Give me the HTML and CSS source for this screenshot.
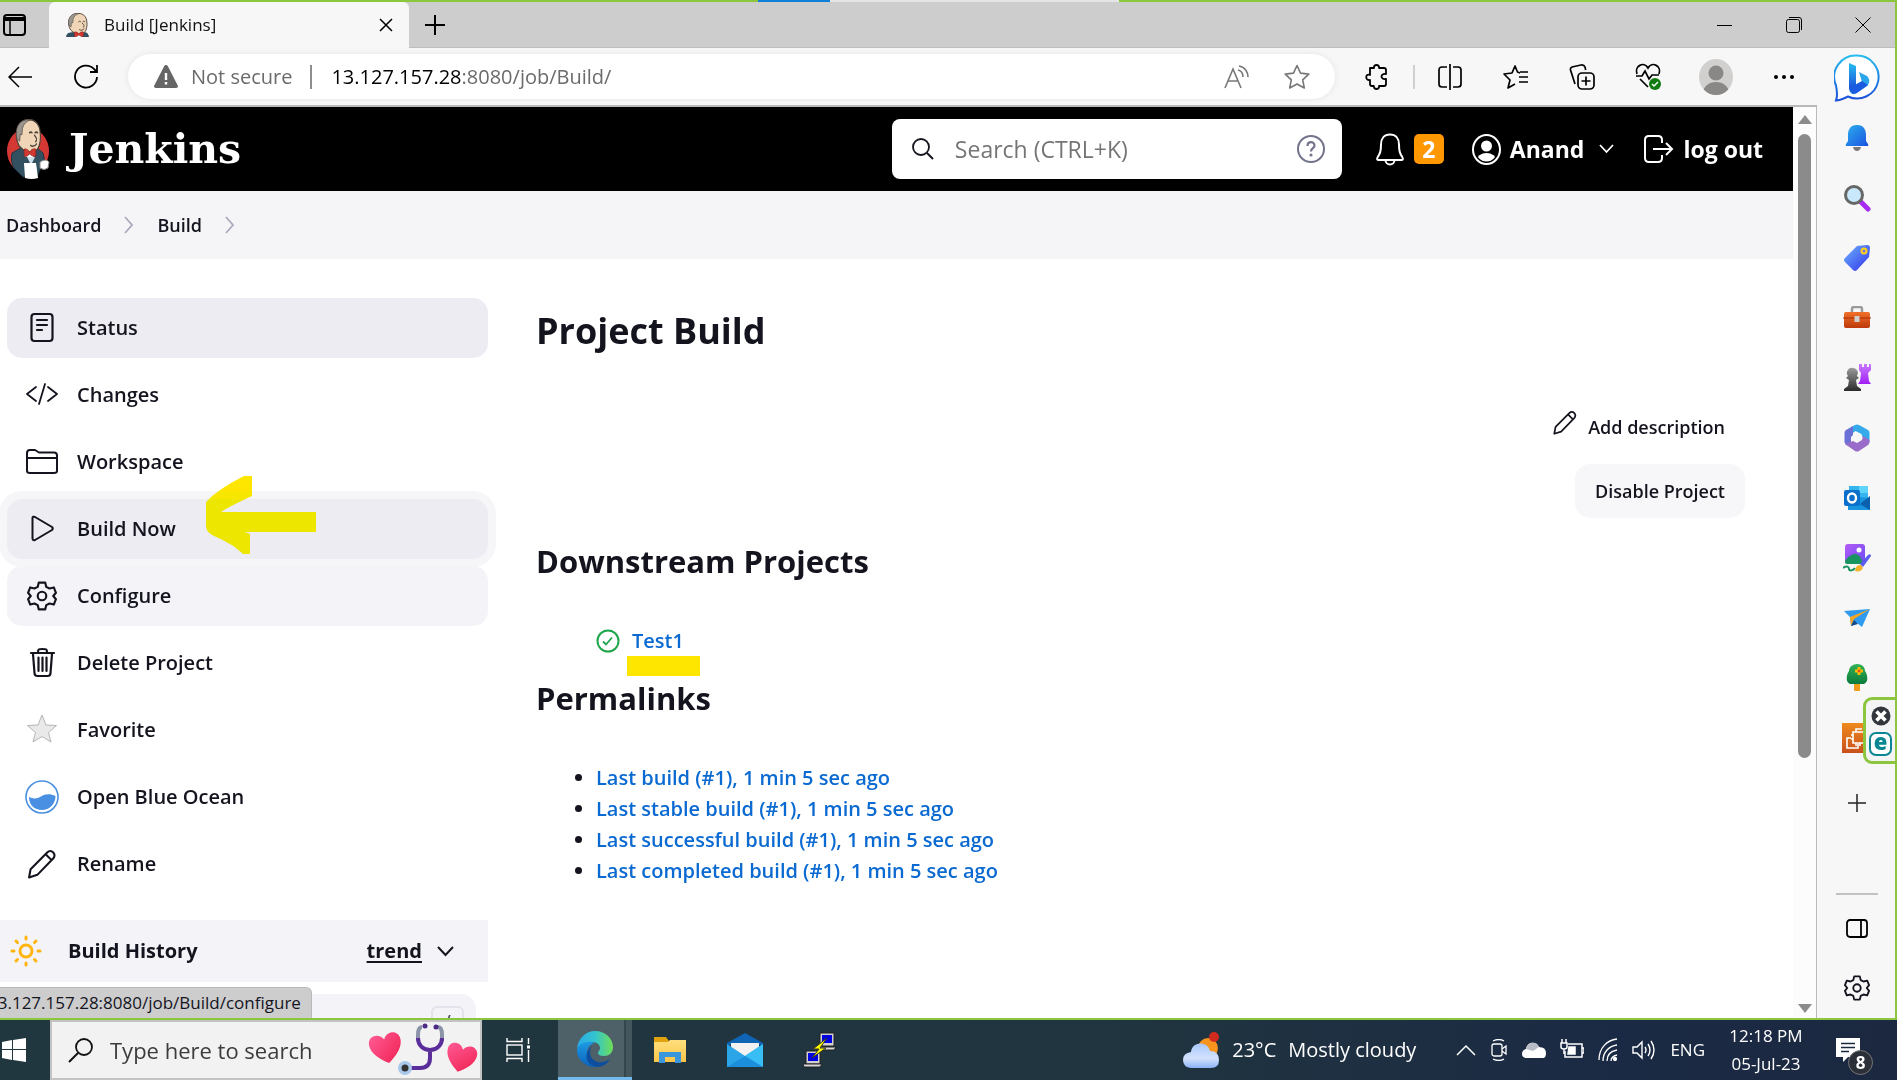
FILE: index.html
```html
<!DOCTYPE html>
<html lang="en">
<head>
<meta charset="utf-8">
<title>Build [Jenkins]</title>
<link rel="stylesheet" href="styles.css">
</head>
<body>
<svg class="defs" aria-hidden="true">
  <defs>
    <linearGradient id="gBlue" x1="0" y1="0" x2="1" y2="1"><stop offset="0" stop-color="#2bb0ee"/><stop offset="1" stop-color="#1b52e0"/></linearGradient>
    <linearGradient id="gBing" x1="0" y1="0" x2="0" y2="1"><stop offset="0" stop-color="#27bdf0"/><stop offset="1" stop-color="#1a4fd8"/></linearGradient>
    <linearGradient id="gTag" x1="0" y1="0" x2="1" y2="1"><stop offset="0" stop-color="#6db5ff"/><stop offset="1" stop-color="#3030e8"/></linearGradient>
    <linearGradient id="gBox" x1="0" y1="0" x2="0" y2="1"><stop offset="0" stop-color="#f0702a"/><stop offset="1" stop-color="#bd3a0c"/></linearGradient>
    <linearGradient id="gPawn" x1="0" y1="0" x2="0" y2="1"><stop offset="0" stop-color="#9a9a9a"/><stop offset="1" stop-color="#2b2b2b"/></linearGradient>
    <linearGradient id="gRook" x1="0" y1="0" x2="0" y2="1"><stop offset="0" stop-color="#c97bff"/><stop offset="1" stop-color="#a01ff5"/></linearGradient>
    <linearGradient id="gTree" x1="0" y1="0" x2="0" y2="1"><stop offset="0" stop-color="#30b457"/><stop offset="1" stop-color="#0c7a3c"/></linearGradient>
    <linearGradient id="gAws" x1="0" y1="0" x2="0" y2="1"><stop offset="0" stop-color="#ef8a1d"/><stop offset="1" stop-color="#c8511b"/></linearGradient>
    <linearGradient id="gHeart" x1="0" y1="0" x2="1" y2="1"><stop offset="0" stop-color="#ff5b95"/><stop offset="1" stop-color="#f0204f"/></linearGradient>
    <linearGradient id="gEdge" x1="0" y1="0" x2="1" y2="0"><stop offset="0" stop-color="#2aa9e8"/><stop offset=".5" stop-color="#33c4cf"/><stop offset="1" stop-color="#6fdf57"/></linearGradient>
    <linearGradient id="gEdgeB" x1="0" y1="0" x2="0" y2="1"><stop offset="0" stop-color="#1d9be5"/><stop offset="1" stop-color="#0c62b8"/></linearGradient>
    <linearGradient id="gFolder" x1="0" y1="0" x2="0" y2="1"><stop offset="0" stop-color="#ffdf7e"/><stop offset="1" stop-color="#fbc547"/></linearGradient>
    <linearGradient id="gCloud" x1="0" y1="0" x2="0" y2="1"><stop offset="0" stop-color="#a9c9fb"/><stop offset=".6" stop-color="#d2e2fd"/><stop offset="1" stop-color="#8db4f5"/></linearGradient>
    <linearGradient id="gPic" x1="0" y1="0" x2="1" y2="1"><stop offset="0" stop-color="#b45cf7"/><stop offset="1" stop-color="#6a4bf3"/></linearGradient>
    <symbol id="butler" viewBox="0 0 54 48" preserveAspectRatio="none">
      <path d="M0 48c1-5 3-8 10-9l16-2 17 1c7 1 10 4 11 10z" fill="#335061"/>
      <path d="M20 36l9 7 10-7-2 12H22z" fill="#fff"/>
      <path d="M11 34C2 22 5 4 24 1c14-2 25 5 25 18 1 8-1 18-9 22-9 3-22 0-29-7z" fill="#f0d6b7" stroke="#49403a" stroke-width="2"/>
      <path d="M7 25C2 9 14-1 32 1c-8 2-13 5-15 11l-1 8-3-1-1 9z" fill="#9a958f" stroke="#49403a"/>
      <path d="M29 18c2-2 4-2 6 0M39 18c2-2 4-2 6 0M38 20c5 4 6 7 2 9M31 33c5 3 9 1 12-2" fill="none" stroke="#49403a" stroke-width="2"/>
      <path d="M20 38c4-1 8 1 10 4 3-4 7-5 11-4v9c-4 1-8-1-11-3-3 3-7 4-10 3z" fill="#d33833" stroke="#81211b"/>
    </symbol>
    <symbol id="pencil" viewBox="0 0 28 28"><path d="M1.500 26.500l1.500-8L19 2.500c4-4 9 1.500 6 5.500L9.500 24zM17.500 4l6.500 6.500" fill="none" stroke="currentColor" stroke-width="2" stroke-linejoin="round"/></symbol>
    <symbol id="cog" viewBox="0 0 28 28"><path d="M11 1.500h6l1 4 3 1.500 4-1 2 5-2.500 3 2.500 3-2 5-4-1-3 1.500-1 4h-6l-1-4-3-1.500-4 1-2-5 2.500-3L1 11l2-5 4 1 3-1.500z" fill="none" stroke="currentColor" stroke-width="2" stroke-linejoin="round"/><circle cx="14" cy="14" r="4" fill="none" stroke="currentColor" stroke-width="2"/></symbol>
    <symbol id="heart" viewBox="0 0 34 32"><path d="M17 31C8 25 1 18 1 10 1 0 13-1 17 7c4-8 16-7 16 3 0 8-7 15-16 21z" fill="url(#gHeart)"/></symbol>
  </defs>
</svg>

<div class="browser">
  <div class="share-line" aria-hidden="true"><span></span></div>
  <header class="titlebar">
    <button class="tab-actions" aria-label="Tab actions"><svg width="23" height="22" viewBox="0 0 23 22"><rect x="1" y="1" width="21" height="20" rx="3" fill="none" stroke="#000" stroke-width="2"/><path d="M1 3h21v4H1z"/><path d="M7 7v14" stroke="#000" stroke-width="1.500"/></svg></button>
    <div class="tab">
      <svg class="favicon" width="23" height="24"><use href="#butler"/></svg>
      <span class="tab-title">Build [Jenkins]</span>
      <button class="tab-close" aria-label="Close tab"><svg width="14" height="14" viewBox="0 0 14 14"><path d="M1 1l12 12M13 1L1 13" stroke="#000" stroke-width="1.500"/></svg></button>
    </div>
    <button class="new-tab" aria-label="New tab"><svg width="22" height="22" viewBox="0 0 22 22"><path d="M11 1v20M1 11h20" stroke="#000" stroke-width="2"/></svg></button>
    <div class="window-controls">
      <button aria-label="Minimize"><svg width="16" height="16" viewBox="0 0 16 16"><path d="M0 8.500h15" stroke="#000"/></svg></button>
      <button aria-label="Restore"><svg width="16" height="16" viewBox="0 0 16 16"><rect x=".5" y="2.500" width="13" height="13" rx="2" fill="none" stroke="#000"/><path d="M3 .5h10a2.500 2.500 0 0 1 2.500 2.500v10" fill="none" stroke="#000"/></svg></button>
      <button aria-label="Close"><svg width="16" height="16" viewBox="0 0 16 16"><path d="M.5.5l15 15M15.500.5l-15 15" stroke="#000"/></svg></button>
    </div>
  </header>

  <div class="window">
    <div class="main-column">
      <div class="toolbar">
        <button class="nav" aria-label="Back"><svg width="24" height="22" viewBox="0 0 24 22"><path d="M11 1L1 11l10 10M1 11h23" fill="none" stroke="#000" stroke-width="1.500"/></svg></button>
        <button class="nav reload" aria-label="Refresh"><svg width="26" height="26" viewBox="0 0 26 26"><path d="M24 13a11 11 0 1 1-3-8l2.500 2.500M24 1v7h-7" fill="none" stroke="#000" stroke-width="1.800"/></svg></button>
        <div class="address">
          <svg width="24" height="23" viewBox="0 0 24 23"><path d="M12 0c1 0 1.500.5 2 1.500L24 21c0 1-.5 2-2 2H2c-1.500 0-2-1-2-2L10 1.500C10.500.5 11 0 12 0z" fill="#666"/><path d="M12 8v7M12 17v2.500" stroke="#fff" stroke-width="2.400"/></svg>
          <span class="insecure">Not secure</span>
          <span class="url"><b>13.127.157.28</b>:8080/job/Build/</span>
          <button aria-label="Read aloud"><svg width="26" height="24" viewBox="0 0 26 24"><path d="M1 23L9 4l8 19M4 16h10M14 5c4 1 5 4 5 7M15 1c6 1 9 6 9 11" fill="none" stroke="#777" stroke-width="1.600"/></svg></button>
          <button aria-label="Add to favorites"><svg width="26" height="26" viewBox="0 0 26 26"><path d="M13 1.500l3.500 7.600 8.300 1-6.100 5.700 1.600 8.200L13 20l-7.300 4 1.600-8.200L1.200 10.100l8.300-1z" fill="none" stroke="#777" stroke-width="1.600" stroke-linejoin="round"/></svg></button>
        </div>
        <button class="tool" aria-label="Extensions"><svg width="26" height="26" viewBox="0 0 26 26"><path d="M5 4h4c-1-4 6-4 5 0h5q2 0 2 2v4c-6-1-6 6 0 5v5q0 2-2 2h-5c1 4-6 4-5 0H7q-2 0-2-2v-4c-5 1-5-7 0-5V6z" fill="none" stroke="#000" stroke-width="1.800" stroke-linejoin="round"/></svg></button>
        <span class="tool-divider"></span>
        <button class="tool" aria-label="Split screen"><svg width="24" height="26" viewBox="0 0 24 26"><path d="M9 3H4Q1 3 1 6v14q0 3 3 3h5M15 3h5q3 0 3 3v14q0 3-3 3h-5M12 0v26" fill="none" stroke="#000" stroke-width="1.700"/></svg></button>
        <button class="tool" aria-label="Favorites"><svg width="26" height="26" viewBox="0 0 26 26"><path d="M17 9l-2.500-1L12 2 9 9l-8 1 6 6-2 8 7-4M16 13h9M16 18h9M17 8h8" fill="none" stroke="#000" stroke-width="1.700" stroke-linejoin="round"/></svg></button>
        <button class="tool" aria-label="Collections"><svg width="26" height="26" viewBox="0 0 26 26"><rect x="9" y="9" width="16" height="16" rx="4" fill="none" stroke="#000" stroke-width="1.700"/><path d="M17 12.500v9M12.500 17h9M6 20L1.500 6Q1 4 3 3l9-2q3-.5 4 2l.7 3" fill="none" stroke="#000" stroke-width="1.700"/></svg></button>
        <button class="tool" aria-label="Browser essentials"><svg width="26" height="27" viewBox="0 0 26 27"><path d="M2 11C-1 3 9-2 13 5c4-7 14-2 11 6M1 13h6l3-5 4 8 3-4h7M5 16l8 8" fill="none" stroke="#000" stroke-width="1.700"/><circle cx="20" cy="21" r="6" fill="#0f7b10"/><path d="M17 21l2 2 4-4" fill="none" stroke="#fff" stroke-width="1.400"/></svg></button>
        <button class="tool wide" aria-label="Profile"><svg width="34" height="36" viewBox="0 0 34 36"><clipPath id="av"><ellipse cx="17" cy="18" rx="17" ry="18"/></clipPath><g clip-path="url(#av)"><path d="M0 0h34v36H0z" fill="#d2d0ce"/><circle cx="17" cy="14" r="7.500" fill="#8a8886"/><ellipse cx="17" cy="34" rx="13" ry="11" fill="#8a8886"/></g></svg></button>
        <button class="tool" aria-label="Settings and more"><svg width="20" height="6" viewBox="0 0 20 6"><circle cx="2" cy="3" r="2"/><circle cx="10" cy="3" r="2"/><circle cx="18" cy="3" r="2"/></svg></button>
      </div>

      <div class="viewport">
        <div class="page">
          <header class="jenkins-header">
            <a class="brand" href="#">
              <svg width="44" height="60" viewBox="0 0 44 60"><ellipse cx="21" cy="32" rx="21" ry="23" fill="#d33833"/><path d="M5 34l9-5h16l6 5 2 10-4 4-4 10H16l-8-8c-4-4-4-12-3-16z" fill="#335061" stroke="#1d3440"/><path d="M17 32l7 14 7-14z" fill="#cfe0ea"/><use href="#butler" x="6" y="0" width="30" height="38"/><path d="M17 44h12l2 15q-6 2-13 0z" fill="#fff"/><path d="M33 43q6-4 9 0l-1 6q-4 3-8 0z" fill="#fff" stroke="#888"/></svg>
              <span>Jenkins</span>
            </a>
            <label class="search">
              <svg width="22" height="22" viewBox="0 0 22 22"><circle cx="9" cy="9" r="8" fill="none" stroke="#14141f" stroke-width="1.800"/><path d="M15 15l6 6" stroke="#14141f" stroke-width="2"/></svg>
              <input type="text" placeholder="Search (CTRL+K)" aria-label="Search">
              <a href="#" aria-label="Search help"><svg width="28" height="28" viewBox="0 0 28 28"><circle cx="14" cy="14" r="13" fill="none" stroke="#73738c" stroke-width="2"/><path d="M10.500 11c0-5 7-5 7-.5 0 3-3.500 2.500-3.500 6" fill="none" stroke="#73738c" stroke-width="2.200"/><circle cx="14" cy="20" r="1.600" fill="#73738c"/></svg></a>
            </label>
            <a class="notices" href="#"><svg width="28" height="33" viewBox="0 0 28 33"><path d="M14 1.500C8 1.500 5 6 5 11.500c0 7-1 9-3.500 13q-1 2.500 1 2.500h23q2 0 1-2.500C24 20.500 23 18.500 23 11.500 23 6 20 1.500 14 1.500zM9.500 27c0 6 9 6 9 0" fill="none" stroke="#fff" stroke-width="2"/></svg><span class="badge">2</span></a>
            <a class="user" href="#"><svg width="29" height="31" viewBox="0 0 29 31"><clipPath id="uc"><ellipse cx="14.500" cy="15.500" rx="11" ry="12"/></clipPath><ellipse cx="14.500" cy="15.500" rx="13.500" ry="14.500" fill="none" stroke="#fff" stroke-width="2"/><g fill="#fff" clip-path="url(#uc)"><circle cx="14.500" cy="12" r="5.500"/><ellipse cx="14.500" cy="27" rx="10" ry="8"/></g></svg><span>Anand</span><svg class="caret" width="15" height="10" viewBox="0 0 15 10"><path d="M1 1l6.500 7L14 1" fill="none" stroke="#fff" stroke-width="1.800"/></svg></a>
            <a class="logout" href="#"><svg width="30" height="28" viewBox="0 0 30 28"><path d="M18 8V5q0-4-4-4H5Q1 1 1 5v18q0 4 4 4h9q4 0 4-4v-3M9 14h19M22 8l6 6-6 6" fill="none" stroke="#fff" stroke-width="2"/></svg><span>log out</span></a>
          </header>

          <nav class="crumbs" aria-label="Breadcrumb">
            <a href="#">Dashboard</a>
            <svg width="10" height="18" viewBox="0 0 10 18"><path d="M1 1l7 8-7 8" fill="none" stroke="#a9a9bc" stroke-width="1.800"/></svg>
            <a href="#">Build</a>
            <svg width="10" height="18" viewBox="0 0 10 18"><path d="M1 1l7 8-7 8" fill="none" stroke="#a9a9bc" stroke-width="1.800"/></svg>
          </nav>

          <div class="page-body">
            <aside class="side">
              <nav class="tasks">
                <a class="task current" href="#"><svg width="32" height="32" viewBox="0 0 32 32" fill="none" stroke="#14141f" stroke-width="2.200" stroke-linecap="round"><rect x="5.500" y="2" width="21" height="27" rx="3"/><path d="M11 8h10M11 13h10M11 18h5"/></svg>Status</a>
                <a class="task" href="#"><svg width="32" height="32" viewBox="0 0 32 32" fill="none" stroke="#14141f" stroke-width="1.800" stroke-linecap="round" stroke-linejoin="round"><path d="M10 8l-9 7 9 7M22 8l9 7-9 7M19 5l-6 20"/></svg>Changes</a>
                <a class="task" href="#"><svg width="32" height="32" viewBox="0 0 32 32" fill="none" stroke="#14141f" stroke-width="2" stroke-linejoin="round"><path d="M1 25V7q0-3 3-3h5l4 2.500h15q3 0 3 3V25q0 2-3 2H4q-3 0-3-2zM1 12h30"/></svg>Workspace</a>
                <a class="task focused" href="#"><svg width="32" height="32" viewBox="0 0 32 32" fill="none" stroke="#14141f" stroke-width="2" stroke-linejoin="round"><path d="M6.500 5v20q0 3 2.500 2l17-10q1.500-1.500 0-3L9 4Q6.500 3 6.500 5z"/></svg>Build Now</a>
                <a class="task hovered" href="#"><svg width="30" height="32"><use href="#cog"/></svg>Configure</a>
                <a class="task" href="#"><svg width="32" height="32" viewBox="0 0 32 32" fill="none" stroke="#14141f" stroke-width="2.200" stroke-linecap="round"><path d="M5 6h23M12 5c0-3 1-3 4.500-3S21 2 21 5M7 7l1.500 19q0 3 3 3h10q3 0 3-3L26 7M12.500 10.500V24M16.500 10.500V24M20.500 10.500V24"/></svg>Delete Project</a>
                <a class="task" href="#"><svg width="32" height="32" viewBox="0 0 32 32"><path d="M16 1l4 10 10.500.5-8 7L25 28l-9-5.500L7 28l2.500-9.500-8-7L12 11z" fill="#e9e9e9" stroke="#b5b5b5"/></svg>Favorite</a>
                <a class="task" href="#"><svg width="34" height="34" viewBox="0 0 34 34"><circle cx="17" cy="17" r="16" fill="#fff" stroke="#4a90e2" stroke-width="1.600"/><path d="M4 17c4 2 8 2 12-.5s9-3 14.500-.5c0 8-6 14-13.500 14S4 25 4 17z" fill="#4a90e2"/></svg>Open Blue Ocean</a>
                <a class="task" href="#"><svg width="32" height="29"><use href="#pencil"/></svg>Rename</a>
              </nav>
              <section class="history">
                <div class="history-head">
                  <svg width="32" height="32" viewBox="0 0 32 32" fill="none" stroke="#ffb40e" stroke-width="3" stroke-linecap="round"><circle cx="16" cy="16" r="6"/><path d="M16 2v2M16 28v2M2 16h2M28 16h2M6 6l1.500 1.500M24.500 24.500L26 26M26 6l-1.500 1.500M7.500 24.500L6 26"/></svg>
                  <h2>Build History</h2>
                  <a href="#">trend</a>
                  <svg width="17" height="11" viewBox="0 0 17 11"><path d="M1 1l7.500 8L16 1" fill="none" stroke="#14141f" stroke-width="2"/></svg>
                </div>
                <div class="filter"><kbd>/</kbd></div>
              </section>
              <svg class="arrow-mark" width="110" height="78" viewBox="0 0 110 78" aria-hidden="true"><path d="M0 26Q12 13 38 0h8v20Q24 30 15 36h95v20H39l5 2v20h-7Q27 68 8 60 0 56 0 50z" fill="#ffe600"/></svg>
            </aside>

            <main class="content">
              <h1>Project Build</h1>
              <div class="actions">
                <a class="describe" href="#"><svg width="24" height="24"><use href="#pencil"/></svg>Add description</a>
                <button class="disable">Disable Project</button>
              </div>
              <h2>Downstream Projects</h2>
              <p class="downstream">
                <svg width="24" height="24" viewBox="0 0 24 24" fill="none" stroke="#1ea64b"><circle cx="12" cy="12" r="10.500" stroke-width="2"/><path d="M7 12.500l3 3 6-7" stroke-width="1.800"/></svg>
                <a href="#">Test1</a>
              </p>
              <h2>Permalinks</h2>
              <ul class="permalinks">
                <li><a href="#">Last build (#1), 1 min 5 sec ago</a></li>
                <li><a href="#">Last stable build (#1), 1 min 5 sec ago</a></li>
                <li><a href="#">Last successful build (#1), 1 min 5 sec ago</a></li>
                <li><a href="#">Last completed build (#1), 1 min 5 sec ago</a></li>
              </ul>
            </main>
          </div>
        </div>
        <div class="scrollbar" aria-hidden="true">
          <svg width="14" height="9" viewBox="0 0 14 9"><path d="M0 9l7-9 7 9z" fill="#8b8b8b"/></svg>
          <div class="track"><div class="thumb"></div></div>
          <svg width="14" height="9" viewBox="0 0 14 9"><path d="M0 0l7 9 7-9z" fill="#8b8b8b"/></svg>
        </div>
        <div class="status-bubble">13.127.157.28:8080/job/Build/configure</div>
      </div>
    </div>

    <aside class="edge-bar">
      <button class="bing" aria-label="Bing chat"><svg width="46" height="48" viewBox="0 0 46 48"><path d="M23 1.500a21.500 21.500 0 1 1-9 41c-4 2-8 4-12 4 2-5 1-10 0-15A21.500 21.500 0 0 1 23 1.500z" fill="#fff" stroke="url(#gBing)" stroke-width="2"/><path d="M15 9l7 3v19l-7 4z" fill="url(#gBing)"/><path d="M25 18l8 4c3 3 3 7 0 10l-12 8q-5 1-6-5l13-7z" fill="#2aa5ea"/><path d="M15 34l13-7 6 4-11 8q-6 3-8-5z" fill="#1b5be0"/></svg></button>
      <button aria-label="Notifications"><svg width="26" height="28" viewBox="0 0 26 28"><path d="M13 1C6 1 4 6 4 11v6l-2 3q-1 2 1 2h20q2 0 1-2l-2-3v-6c0-5-2-10-9-10z" fill="url(#gBlue)"/><path d="M9 23h8q-1 4-4 4t-4-4z" fill="#777"/></svg></button>
      <button aria-label="Search"><svg width="28" height="28" viewBox="0 0 28 28"><path d="M18 18l7 7" stroke="#a52cf0" stroke-width="5" stroke-linecap="round"/><circle cx="11" cy="11" r="8.500" fill="#c9e8fb" stroke="#676767" stroke-width="3"/></svg></button>
      <button aria-label="Shopping"><svg width="26" height="28" viewBox="0 0 26 28"><path d="M13 2l10-1q3 0 3 3l-1 9-12 13q-2 2-4 0l-8-8q-2-2 0-4z" fill="url(#gTag)"/><circle cx="20" cy="7" r="2.500" fill="#7a74d8" stroke="#ffd31a" stroke-width="2"/></svg></button>
      <button aria-label="Tools"><svg width="28" height="24" viewBox="0 0 28 24"><path d="M9 6V3q0-2 2-2h6q2 0 2 2v3" fill="none" stroke="#9a9a9a" stroke-width="2.500"/><rect x="1" y="6" width="26" height="16" rx="2" fill="url(#gBox)"/><path d="M0 12h28" stroke="#a83209"/><rect x="11.500" y="10" width="5" height="6" fill="#cfcfcf"/></svg></button>
      <button aria-label="Games"><svg width="28" height="28" viewBox="0 0 28 28"><path d="M16 0h3v3h2V0h3v3h2V0h2v6l-3 3 1 8 2 3H15l2-3 1-8-2-3z" fill="url(#gRook)"/><path d="M10 4a5 5 0 0 1 4 8l2 2-3 2 1 6 4 3v2H1v-2l4-3 1-6-3-2 2-2a5 5 0 0 1 5-8z" fill="url(#gPawn)"/></svg></button>
      <button aria-label="Microsoft 365"><svg width="26" height="28" viewBox="0 0 26 28"><path d="M11 1q2-1 4 0l9 5q1.500 1 1.500 3v9l-7-5-1-3-6-3-4 3V3z" fill="#35a9ea"/><path d="M9 2v9l-2 2v5l-3 4Q.5 20 .5 18V9q0-2 1.500-3z" fill="#6b70d6"/><path d="M1 20l8-3 4 2 5-3 1-4 6.500 4v2q0 2-1.500 3l-9 6q-2 1-4 0z" fill="#9a6bc8"/></svg></button>
      <button aria-label="Outlook"><svg width="26" height="26" viewBox="0 0 26 26"><path d="M5 1h19v12H5z" fill="#35b5f0"/><path d="M15 1h9v7h-9z" fill="#5fd4fb"/><path d="M4 11l22 2v12H4z" fill="#1793df"/><path d="M26 11l-10 8 10 6z" fill="#0a5fae"/><rect x="0" y="5" width="16" height="16" rx="2" fill="#0a70cb"/><ellipse cx="8" cy="13" rx="4" ry="4.500" fill="none" stroke="#fff" stroke-width="2.400"/></svg></button>
      <button aria-label="Image creator"><svg width="28" height="28" viewBox="0 0 28 28"><rect x="2" y="0" width="20" height="20" rx="3" fill="url(#gPic)"/><circle cx="16" cy="6" r="2.500" fill="#fff"/><path d="M2 17q5-7 10-7t7 7v3H4q-2 0-2-3z" fill="#19935f"/><path d="M0 24c4-3 6-1 6 1s4 2 6-1" fill="none" stroke="#19935f" stroke-width="2"/><path d="M12 27q1-7 6-6l2 3q-3 5-8 3z" fill="#f4b32b"/><path d="M17 20l8-9q3-2 3 1l-8 11z" fill="#5a5bf0"/></svg></button>
      <button aria-label="Drop"><svg width="28" height="20" viewBox="0 0 28 20"><path d="M1 3l26-2-8 18-5-4-6 3L7 9z" fill="#2e9af0"/><path d="M27 1L7 9l1 9 3-7z" fill="#f5a623"/><path d="M8 18l3-6 4 4z" fill="#124a8c"/></svg></button>
      <button aria-label="Tree"><svg width="22" height="28" viewBox="0 0 22 28"><path d="M8 19h6v7q0 1-1 1H9q-1 0-1-1z" fill="#f59b1c"/><path d="M11 0c5 0 8 3 8 7 3 4 4 13-3 13H6c-7 0-6-9-3-13 0-4 4-7 8-7z" fill="url(#gTree)"/><path d="M13 3v8M9 7h8" stroke="#ffb800" stroke-width="3"/><circle cx="13" cy="7" r="1.300" fill="#e0451f"/></svg></button>
      <button aria-label="EC2"><svg width="30" height="30" viewBox="0 0 30 30"><path d="M0 0h30v30H0z" fill="url(#gAws)"/><path d="M9 15H5v10h11v-4M11 9h12v11H11zM14 9V6h6M11 12H9M11 16H9M14 20v3M18 20v3" fill="none" stroke="#fff" stroke-width="1.600"/></svg></button>
      <button class="add-app" aria-label="Customize"><svg width="18" height="18" viewBox="0 0 18 18"><path d="M9 0v18M0 9h18" stroke="#222" stroke-width="1.500"/></svg></button>
      <span class="edge-divider"></span>
      <button aria-label="Hide sidebar"><svg width="22" height="19" viewBox="0 0 22 19"><rect x="1" y="1" width="20" height="17" rx="3" fill="none" stroke="#000" stroke-width="1.800"/><path d="M15 1v17" stroke="#000" stroke-width="1.800"/></svg></button>
      <button class="settings" aria-label="Sidebar settings"><svg width="26" height="26"><use href="#cog"/></svg></button>
      <div class="eset">
        <svg width="20" height="20" viewBox="0 0 20 20"><circle cx="10" cy="10" r="9.500" fill="#33373d"/><path d="M5.500 5.500l9 9M14.500 5.500l-9 9" stroke="#fff" stroke-width="3.600"/></svg>
        <span>e</span>
      </div>
    </aside>
  </div>
</div>

<footer class="taskbar">
  <button class="start" aria-label="Start"><svg width="24" height="24" viewBox="0 0 24 24"><path d="M0 4l10-2v9H0zM11 2l13-2v11H11zM0 12h10v10L0 20zM11 12h13v12l-13-2z" fill="#fff"/></svg></button>
  <label class="task-search">
    <svg width="25" height="25" viewBox="0 0 25 25"><circle cx="16" cy="9" r="8" fill="none" stroke="#111" stroke-width="1.800"/><path d="M10 15L1 24" stroke="#111" stroke-width="2"/></svg>
    <input type="text" placeholder="Type here to search" aria-label="Type here to search">
    <svg width="110" height="54" viewBox="0 0 110 54"><g transform="translate(1 9) rotate(-12 18 16)"><use href="#heart" width="34" height="32"/></g><path d="M54 4q-4 0-4 8v6M70 4q4 0 4 8v6" fill="none" stroke="#8b93a8" stroke-width="4"/><path d="M50 15c0 7 5 12 12 12s12-5 12-12M62 27v8c0 7-4 10-10 10h-9" fill="none" stroke="#5b2d9b" stroke-width="4"/><circle cx="57" cy="3" r="2.500" fill="#4c2a85"/><circle cx="68" cy="4" r="2.500" fill="#4c2a85"/><circle cx="37" cy="45" r="7" fill="#a9c8ea"/><circle cx="37" cy="45" r="3.500" fill="#333"/><g transform="translate(77 20) rotate(14 16 15)"><use href="#heart" width="32" height="30"/></g></svg>
  </label>
  <button class="task-view" aria-label="Task view"><svg width="24" height="24" viewBox="0 0 24 24" fill="none" stroke="#fff" stroke-width="1.400"><rect x="1" y="7" width="15" height="10"/><path d="M1 0v3.500h15V0M1 24v-3.500h15V24M22.500 0v6M22.500 12v12"/><path d="M21 7.500h3v3h-3z" fill="#fff" stroke="none"/></svg></button>
  <button class="app open" aria-label="Microsoft Edge"><svg width="36" height="36" viewBox="0 0 36 36"><path d="M0 18C1 7 9 0 18 0c11 0 18 8 18 16 0 6-4 9-9 9-4 0-6-1-6-3s2-2 2-5c0-4-4-6-8-6C8 11 2 14 0 18z" fill="url(#gEdge)"/><path d="M0 18c3-7 12-9 18-6-6 1-8 6-8 11 0 6 5 13 12 13C10 38-1 29 0 18z" fill="url(#gEdgeB)"/><path d="M15 15c-4 6-2 14 6 16 5 1 9-1 12-3-2 5-8 8-13 8-8-1-12-8-10-14 1-3 2-5 5-7z" fill="#0d4f9e"/></svg></button>
  <button class="app" aria-label="File Explorer"><svg width="32" height="28" viewBox="0 0 32 28"><path d="M0 1h12l3 4v5H0z" fill="#e2a10e"/><path d="M0 6h14l2-2h16v22H0z" fill="url(#gFolder)"/><path d="M5 27V16h22v11h-6v-6H11v6z" fill="#3a96dd"/></svg></button>
  <button class="app" aria-label="Mail"><svg width="36" height="34" viewBox="0 0 36 34"><path d="M0 10L18 0l18 10v2H0z" fill="#0f64b4"/><path d="M4 10h28v14H4z" fill="#f2f2f2"/><path d="M0 11l18 12 18-12v23H0z" fill="#2ba5e8"/><path d="M18 23l18-12v23z" fill="#38bdf4"/><path d="M0 34l18-11 18 11z" fill="#1c8fdc"/></svg></button>
  <button class="app" aria-label="PuTTY"><svg width="36" height="36" viewBox="0 0 36 36"><path d="M18 1h14v13H18z" fill="#d0d0d0" stroke="#222"/><path d="M20 3h10v8H20z" fill="#0000e0"/><path d="M15 15h19l-2 3H16z" fill="#d8d8d8" stroke="#222"/><g transform="translate(-14 18)"><path d="M18 1h14v13H18z" fill="#d0d0d0" stroke="#222"/><path d="M20 3h10v8H20z" fill="#0000e0"/><path d="M15 14h19l-2 3H16z" fill="#d8d8d8" stroke="#222"/></g><path d="M25 6L11 17l6 0-7 9 14-10h-6z" fill="#ff0" stroke="#332"/></svg></button>
  <div class="weather">
    <svg width="37" height="37" viewBox="0 0 37 37"><circle cx="25" cy="16" r="10" fill="#f7941e"/><path d="M8 36q-8-1-8-8t8-8C9 9 25 9 27 19q9 0 9 9 0 8-8 8z" fill="url(#gCloud)"/><circle cx="31" cy="5" r="5" fill="#d12a1e"/></svg>
    <span>23°C</span><span>Mostly cloudy</span>
  </div>
  <div class="tray">
    <svg width="20" height="12" viewBox="0 0 20 12"><path d="M1 11l9-9 9 9" fill="none" stroke="#fff" stroke-width="1.500"/></svg>
    <svg width="18" height="22" viewBox="0 0 18 22" fill="none" stroke="#fff" stroke-width="1.300"><rect x="2" y="5" width="10" height="12" rx="2"/><path d="M12 10l4-3v8l-4-3M3 2q6-3 11 0M3 20q6 3 11 0"/></svg>
    <svg width="24" height="16" viewBox="0 0 24 16"><path d="M5 16q-5 0-5-4t4-5C5-1 15-1 17 5q7 0 7 6t-5 5z" fill="#fff"/><path d="M4 7C6-1 15-1 17 5l-6 4z" fill="#b8bdc5"/></svg>
    <svg width="24" height="22" viewBox="0 0 24 22" fill="none" stroke="#fff" stroke-width="1.500"><path d="M8 5h14v13H5v-6"/><path d="M22 9h2v5h-2"/><path d="M9 8h6v7H8z" fill="#fff"/><path d="M1 4h6v4q0 2-3 2T1 8zM2 4V0M6 4V0M4 10v5"/></svg>
    <svg width="20" height="24" viewBox="0 0 20 24" fill="none" stroke="#fff" stroke-width="1.300"><path d="M1 22C1 10 9 2 19 1M5 23C5 14 11 8 19 7M9 23c0-6 4-10 10-11M13 23c0-3 2-5 6-6"/><circle cx="17" cy="21" r="1.500" fill="#fff"/></svg>
    <svg width="24" height="22" viewBox="0 0 24 22" fill="none" stroke="#fff" stroke-width="1.400"><path d="M1 8h4l5-5v16l-5-5H1zM13 8q2 3 0 6M16 5q4 6 0 12M19 2q6 9 0 18"/></svg>
    <span class="lang">ENG</span>
    <time class="clock"><span>12:18 PM</span><span>05-Jul-23</span></time>
    <button class="action-center" aria-label="Notifications"><svg width="24" height="24" viewBox="0 0 24 24"><path d="M0 0h24v19H12l-5 5v-5H0z" fill="#fff"/><path d="M5 5.500h14M5 9.500h14M5 13.500h8" stroke="#1b2940" stroke-width="1.300"/></svg><span>8</span></button>
  </div>
</footer>
</body>
</html>
```
FILE: styles.css
```css
* { box-sizing: border-box; }

body {
  margin: 0;
  height: 100vh;
  display: flex;
  flex-direction: column;
  overflow: hidden;
  background: #fff;
  color: #14141f;
  font: 600 20px/30px "Open Sans", "Noto Sans", sans-serif;
}

svg { display: block; flex: none; }
.defs { position: absolute; width: 0; height: 0; }
a { color: inherit; text-decoration: none; }
button {
  margin: 0;
  padding: 0;
  border: 0;
  background: none;
  color: inherit;
  font: inherit;
  display: flex;
  align-items: center;
  justify-content: center;
}
input { border: 0; padding: 0; background: none; outline: 0; min-width: 0; font: inherit; }
h1, h2, p, ul { margin: 0; padding: 0; }

/* Browser window */
.browser {
  flex: 1;
  min-height: 0;
  display: flex;
  flex-direction: column;
  position: relative;
  border: solid #8cc63f;
  border-width: 2px 2px 2px 0;
}
.share-line {
  position: absolute;
  top: -2px;
  left: 40%;
  width: 361px;
  height: 2px;
  background: #e5e5e5;
}
.share-line span { display: block; width: 72px; height: 2px; background: #0f7fd7; }

.titlebar {
  height: 46px;
  display: flex;
  background: #cdcdcd;
  border-bottom: 1px solid #bdbdbd;
}
.tab-actions { width: 49px; padding-right: 20px; border-radius: 0 0 6px 0; }
.tab {
  width: 360px;
  height: 46px;
  display: flex;
  align-items: center;
  padding: 0 16px 0 17px;
  background: #f7f7f7;
  border-radius: 6px 6px 0 0;
}
.tab-title { flex: 1; margin-left: 15px; font-size: 17px; font-weight: 400; color: #111; }
.new-tab { width: 52px; }
.window-controls { margin-left: auto; display: flex; padding-right: 24px; gap: 53px; }

.window { flex: 1; min-height: 0; display: flex; background: #f7f7f7; }
.main-column { flex: 1; min-width: 0; display: flex; flex-direction: column; }

.toolbar { height: 57px; flex: none; display: flex; align-items: center; }
.nav { width: 40px; height: 40px; }
.reload { margin: 0 22px 0 26px; }
.address {
  flex: 1;
  height: 45px;
  margin-right: 10px;
  padding: 0 25px 0 26px;
  display: flex;
  align-items: center;
  border-radius: 23px;
  background: #fff;
  box-shadow: 0 0 6px #e4e4e4;
  font-size: 20px;
  font-weight: 400;
  color: #6b6b6b;
}
.insecure { margin-left: 13px; padding-right: 18px; border-right: 2px solid #8d8d8d; line-height: 24px; }
.url { flex: 1; margin-left: 19px; }
.url b { font-weight: 400; color: #000; }
.address button { margin-left: 34px; }
.tool { width: 66px; height: 40px; }
.tool.wide { width: 70px; }
.tool-divider { width: 2px; height: 24px; margin: 0 2px; background: #cfcfcf; }

.viewport {
  flex: 1;
  min-height: 0;
  display: flex;
  position: relative;
  overflow: hidden;
  border-top: 2px solid #b9b9b9;
  border-right: 1px solid #b9b9b9;
  background: #fff;
}
.page { flex: 1; min-width: 0; }
.scrollbar {
  width: 23px;
  display: flex;
  flex-direction: column;
  align-items: center;
  padding: 8px 0 5px;
  background: #fcfcfc;
}
.track { flex: 1; padding: 10px 0 4px; }
.thumb { width: 13px; height: 72%; border-radius: 7px; background: #8b8b8b; }
.status-bubble {
  position: absolute;
  left: -12px;
  bottom: 0;
  padding: 0 10px 0 0;
  border: solid #b9b9b9;
  border-width: 1px 1px 0 0;
  border-radius: 0 6px 0 0;
  background: #cdcdcd;
  font-size: 17px;
  font-weight: 400;
}

/* Jenkins header */
.jenkins-header {
  height: 84px;
  display: flex;
  align-items: center;
  padding: 0 30px 0 7px;
  background: #000;
  color: #fff;
  font-size: 23px;
  font-weight: 700;
}
.brand { display: flex; align-items: center; gap: 18px; margin-right: auto; }
.brand span { font: 700 41px/48px "DejaVu Serif", serif; }
.search {
  width: 450px;
  height: 60px;
  display: flex;
  align-items: center;
  padding: 0 17px 0 20px;
  border-radius: 8px;
  background: #fff;
}
.search input { flex: 1; margin-left: 21px; font-size: 23px; font-weight: 400; }
.search input::placeholder { color: #757575; opacity: 1; }
.notices { display: flex; align-items: center; gap: 10px; margin-left: 34px; }
.badge { width: 30px; border-radius: 5px; background: #fe9700; text-align: center; }
.user { display: flex; align-items: center; gap: 9px; margin-left: 28px; }
.caret { margin-left: 6px; }
.logout { display: flex; align-items: center; gap: 9px; margin-left: 30px; }

.crumbs {
  height: 68px;
  display: flex;
  align-items: center;
  gap: 23px;
  padding-left: 6px;
  background: #f5f5f8;
  font-size: 18px;
}

.page-body { display: flex; }
.side { width: 488px; padding-top: 39px; position: relative; flex: none; }
.tasks { display: flex; flex-direction: column; gap: 7px; padding-left: 7px; }
.task {
  height: 60px;
  display: grid;
  grid-template-columns: 36px 1fr;
  justify-items: start;
  align-items: center;
  column-gap: 17px;
  padding-left: 17px;
  border-radius: 15px;
  font-size: 20px;
}
.task svg { justify-self: center; }
.current { background: #ececf2; }
.focused { background: #ececf2; box-shadow: 0 0 0 8px #f6f6f9; }
.hovered { background: #f3f3f8; position: relative; }
.arrow-mark { position: absolute; left: 206px; top: 217px; mix-blend-mode: darken; }

.history { margin-top: 26px; }
.history-head {
  height: 62px;
  display: flex;
  align-items: center;
  padding: 0 34px 0 10px;
  background: #f3f3f8;
}
.history-head h2 { flex: 1; margin-left: 26px; font-size: 20px; font-weight: 700; line-height: 30px; }
.history-head a { margin-right: 15px; font-weight: 700; text-decoration: underline; text-decoration-thickness: 2px; text-underline-offset: 3px; }
.filter {
  height: 54px;
  margin: 12px 12px 0 7px;
  padding: 12px;
  display: flex;
  justify-content: flex-end;
  border-radius: 15px;
  background: #f3f3f8;
}
.filter kbd {
  width: 33px;
  height: 30px;
  border: 2px solid #e3e3ec;
  border-radius: 6px;
  text-align: center;
  font: 600 16px/26px "Open Sans", sans-serif;
  color: #4d4d66;
}

.content { flex: 1; min-width: 0; padding: 48px 48px 0; }
.content h1 { font-size: 36px; line-height: 48px; font-weight: 700; }
.content h2 { font-size: 31px; line-height: 40px; font-weight: 700; }
.actions { display: flex; flex-direction: column; align-items: flex-end; margin: 46px 0 23px; font-size: 18px; }
.describe { height: 52px; display: flex; align-items: center; gap: 11px; padding-right: 20px; margin-bottom: 11px; }
.describe svg { margin-bottom: 8px; }
.disable { height: 54px; padding: 0 20px; border-radius: 15px; background: #f7f7f9; }
.content ul a, .downstream a { color: #0b6ad1; }
.downstream { display: flex; align-items: center; gap: 12px; margin: 44px 0 22px 60px; line-height: 31px; position: relative; }
.downstream::after {
  content: "";
  position: absolute;
  left: 31px;
  top: 31px;
  width: 73px;
  height: 20px;
  background: #ffe600;
}
.permalinks { margin: 44px 0 0; padding-left: 60px; line-height: 31px; }

/* Edge sidebar */
.edge-bar {
  width: 78px;
  display: flex;
  flex-direction: column;
  align-items: center;
  padding: 6px 0 0 2px;
  position: relative;
}
.edge-bar button { width: 60px; height: 60px; flex: none; }
.edge-bar .bing { height: 48px; margin-bottom: 6px; }
.edge-bar .add-app { height: 70px; }
.edge-divider { width: 42px; height: 2px; margin: auto 0 3px; background: #c2c2c2; flex: none; }
.eset {
  position: absolute;
  right: -2px;
  top: 649px;
  width: 34px;
  height: 67px;
  display: flex;
  flex-direction: column;
  align-items: center;
  gap: 6px;
  padding-top: 6px;
  border: 3px solid #8cc63f;
  border-width: 3px 2px 3px 3px;
  border-radius: 9px 0 0 9px;
  background: #f4f4f4;
}
.eset span {
  width: 23px;
  height: 24px;
  border: 2px solid #0b8793;
  border-radius: 7px;
  background: #fff;
  color: #0b8793;
  font-size: 22px;
  line-height: 15px;
  font-weight: 800;
  text-align: center;
}

/* Windows taskbar */
.taskbar {
  height: 60px;
  flex: none;
  display: flex;
  background: linear-gradient(90deg, #20373f 0%, #20343f 60%, #1b2a44 85%, #1b2840 100%);
  color: #fff;
  font-weight: 400;
}
.start { width: 50px; padding-right: 22px; }
.task-search {
  width: 432px;
  display: flex;
  align-items: center;
  padding: 0 2px 0 16px;
  border: 2px solid #c3c3c3;
  background: #f2f2f2;
}
.task-search input { flex: 1; margin-left: 17px; font-size: 22px; }
.task-search input::placeholder { color: #3c3c3c; opacity: 1; }
.task-view { width: 76px; padding-right: 4px; }
.app { width: 75px; }
.app.open {
  width: 74px;
  padding-right: 1px;
  border-bottom: 3px solid #76b9ed;
  background: linear-gradient(90deg, #4f6168 66px, #33464e 66px, #33464e 68px, #43565d 68px);
}
.weather { display: flex; align-items: center; gap: 12px; margin-left: auto; margin-right: 40px; font-size: 20px; }
.tray { display: flex; align-items: center; gap: 14px; font-size: 17px; }
.clock { display: flex; flex-direction: column; width: 84px; margin-left: 5px; align-items: center; line-height: 28px; font-size: 17px; }
.action-center { position: relative; margin: 0 37px 0 14px; }
.action-center span {
  position: absolute;
  left: 12px;
  top: 12px;
  width: 25px;
  height: 25px;
  border: 1px solid #777;
  border-radius: 50%;
  background: #2b2f37;
  font-weight: 700;
  line-height: 23px;
  text-align: center;
}
```
